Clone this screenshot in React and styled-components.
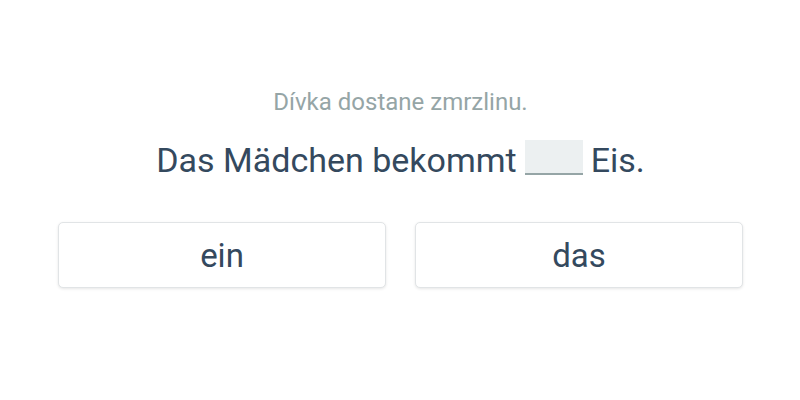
import React from 'react';
import styled, { createGlobalStyle } from 'styled-components';

const GlobalStyle = createGlobalStyle`
  body {
    margin: 0;
    background: #ffffff;
    font-family: Roboto, "Noto Sans", sans-serif;
  }
`;

const Page = styled.div`
  width: 800px;
  height: 400px;
  box-sizing: border-box;
  padding: 88px 57px 0 58px;
  display: flex;
  flex-direction: column;
  align-items: center;
`;

const Translation = styled.div`
  font-size: 24px;
  line-height: 28px;
  color: #95a5a6;
`;

const Sentence = styled.div`
  margin-top: 24px;
  font-size: 34px;
  line-height: 40px;
  color: #34495e;
  display: flex;
  align-items: flex-start;
  gap: 8px;
`;

const Blank = styled.span`
  display: inline-block;
  width: 58px;
  height: 33px;
  background: #ecf0f1;
  border-bottom: 2px solid #95a5a6;
`;

const Options = styled.div`
  margin-top: 42px;
  width: 100%;
  display: grid;
  grid-template-columns: 1fr 1fr;
  gap: 29px;
`;

const Option = styled.button`
  height: 66px;
  background: #ffffff;
  border: 1px solid #e1e4e6;
  border-radius: 5px;
  box-shadow: 0 1px 3px rgba(0, 0, 0, 0.1);
  font-family: Roboto, "Noto Sans", sans-serif;
  font-size: 33px;
  color: #34495e;
  cursor: pointer;
`;

const options = ['ein', 'das'];

export default function App() {
  return (
    <>
      <GlobalStyle />
      <Page>
        <Translation>Dívka dostane zmrzlinu.</Translation>
        <Sentence>
          <span>Das Mädchen bekommt</span>
          <Blank />
          <span>Eis.</span>
        </Sentence>
        <Options>
          {options.map(option => (
            <Option key={option}>{option}</Option>
          ))}
        </Options>
      </Page>
    </>
  );
}
